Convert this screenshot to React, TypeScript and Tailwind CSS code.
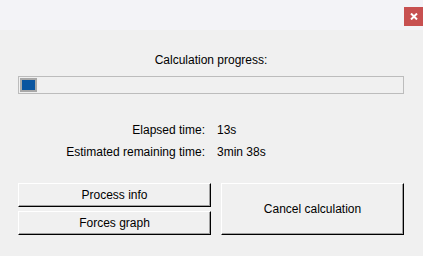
import React from "react";

function Btn({ children, className = "" }: { children: React.ReactNode; className?: string }) {
  return (
    <button
      className={
        "flex items-center justify-center bg-[#f0f0f0] border border-t-white border-l-white border-b-black border-r-black shadow-[inset_-1px_-1px_0_#a0a0a0] text-[12px] leading-[16px] text-black " +
        className
      }
    >
      {children}
    </button>
  );
}

export default function App() {
  return (
    <div
      className="w-[423px] h-[256px] bg-[#f0f0f0] flex flex-col overflow-hidden text-black"
      style={{ fontFamily: '"Liberation Sans", Arial, sans-serif' }}
    >
      <div className="h-[30px] bg-[#f3f3f7] flex justify-end items-start shrink-0">
        <div className="mt-[7px] w-[19px] h-[19px] bg-[#c75050] flex items-center justify-center">
          <svg width="8" height="7" viewBox="0 0 8 7">
            <path d="M1 0.5 L7 6.5 M7 0.5 L1 6.5" stroke="white" strokeWidth="2" />
          </svg>
        </div>
      </div>
      <div className="flex flex-col pl-[18px] pr-[19px]">
        <div className="mt-[22px] text-center text-[12px] leading-[16px]">Calculation progress:</div>
        <div className="mt-[8px] h-[18px] border border-[#bcbcbc] flex items-center px-[1px]">
          <div className="w-[17px] h-[14px] border-2 border-[#a8a8a8] bg-[#0a55a0]" />
        </div>
        <div className="mt-[28px] grid grid-cols-[187px_auto] gap-x-[12px] gap-y-[6px] text-[12px] leading-[16px]">
          <div className="text-right">Elapsed time:</div>
          <div>13s</div>
          <div className="text-right">Estimated remaining time:</div>
          <div>3min 38s</div>
        </div>
        <div className="mt-[23px] flex gap-[10px]">
          <div className="w-[193px] flex flex-col gap-[4px]">
            <Btn className="h-[24px]">Process info</Btn>
            <Btn className="h-[24px]">Forces graph</Btn>
          </div>
          <Btn className="flex-1 h-[52px]">Cancel calculation</Btn>
        </div>
      </div>
    </div>
  );
}
